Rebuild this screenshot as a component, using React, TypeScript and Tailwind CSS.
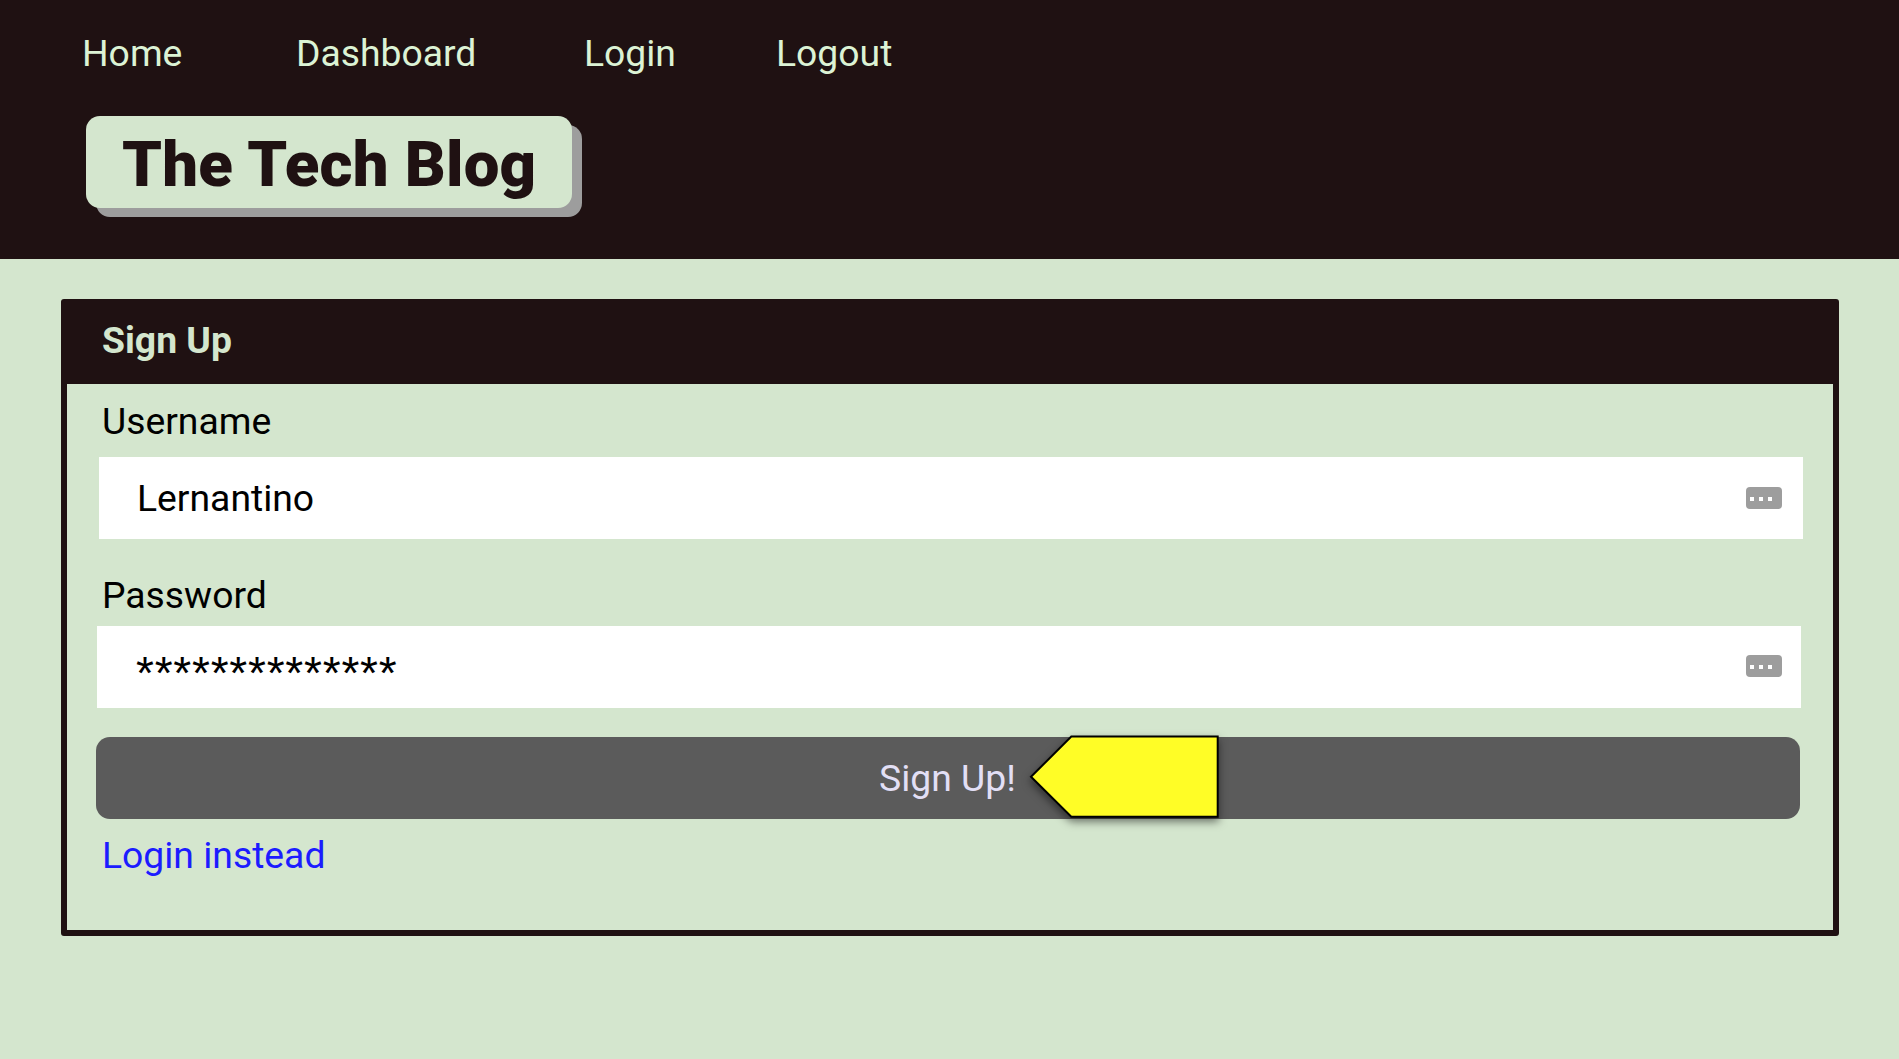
import React from "react";

const navItems = [
  { label: "Home", spacing: "w-[214px]" },
  { label: "Dashboard", spacing: "w-[288px]" },
  { label: "Login", spacing: "w-[192px]" },
  { label: "Logout", spacing: "" },
];

function KeyBadge() {
  return (
    <span className="flex h-[22px] w-9 items-center gap-[5px] rounded bg-[#9d9d9d] pl-1 pt-0.5">
      <span className="size-1 bg-white" />
      <span className="size-1 bg-white" />
      <span className="size-1 bg-white" />
    </span>
  );
}

function Pointer() {
  return (
    <svg
      className="absolute left-[923.5px] -top-3 overflow-visible drop-shadow-[0_4px_4px_rgba(0,0,0,0.5)]"
      width="210"
      height="105"
      viewBox="0 0 210 105"
    >
      <path
        d="M11 51.8 L51.3 11.5 H197.7 V91.7 H51.3 Z"
        fill="#fffd26"
        stroke="#000"
        strokeWidth="2"
      />
    </svg>
  );
}

export default function App() {
  return (
    <div className="h-[1059px] w-full overflow-hidden bg-[#d4e6ce] font-['Roboto',sans-serif] text-[37.3px] leading-[44px] text-black">
      <header className="h-[259px] bg-[#1f1112] pl-[82px] pt-[31px] text-[#dcf3d5]">
        <nav className="flex">
          {navItems.map((item) => (
            <a key={item.label} className={item.spacing}>
              {item.label}
            </a>
          ))}
        </nav>
        <h1 className="ml-1 mt-[41px] h-[92px] w-[486px] rounded-[14px] bg-[#d4e6ce] pl-9 text-[63.5px] font-black leading-[97px] tracking-[0.2px] text-[#1f1112] shadow-[10px_9px_0_#9d9d9d]">
          The Tech Blog
        </h1>
      </header>

      <main className="ml-[61px] mt-10 h-[637px] w-[1778px] rounded-[3px] border-[6px] border-[#1f1112]">
        <h2 className="h-[79px] bg-[#1f1112] pl-[35px] pt-[13px] font-bold text-[#d4e6ce]">
          Sign Up
        </h2>
        <form className="pl-[29px]">
          <label className="block pl-1.5 pt-[15px]">Username</label>
          <div className="ml-[3px] mt-[14px] flex h-[82px] w-[1704px] items-center justify-between bg-white pl-[38px] pr-[21px]">
            <span>Lernantino</span>
            <KeyBadge />
          </div>
          <label className="block pl-1.5 pt-[34px]">Password</label>
          <div className="ml-px mt-[9px] flex h-[82px] w-[1704px] items-center justify-between bg-white pb-0.5 pl-[39px] pr-[19px]">
            <span className="pt-[14px] font-['Liberation_Sans',sans-serif] text-[46px] tracking-[0.77px]">
              **************
            </span>
            <KeyBadge />
          </div>
          <button
            type="button"
            className="relative mt-[29px] flex h-[82px] w-[1704px] rounded-[14px] bg-[#5b5b5b] pl-[783px] pt-[19px] text-left text-[#e2dff5]"
          >
            Sign Up!
            <Pointer />
          </button>
          <a className="block pl-1.5 pt-[14px] text-[#1c1cff]">Login instead</a>
        </form>
      </main>
    </div>
  );
}
